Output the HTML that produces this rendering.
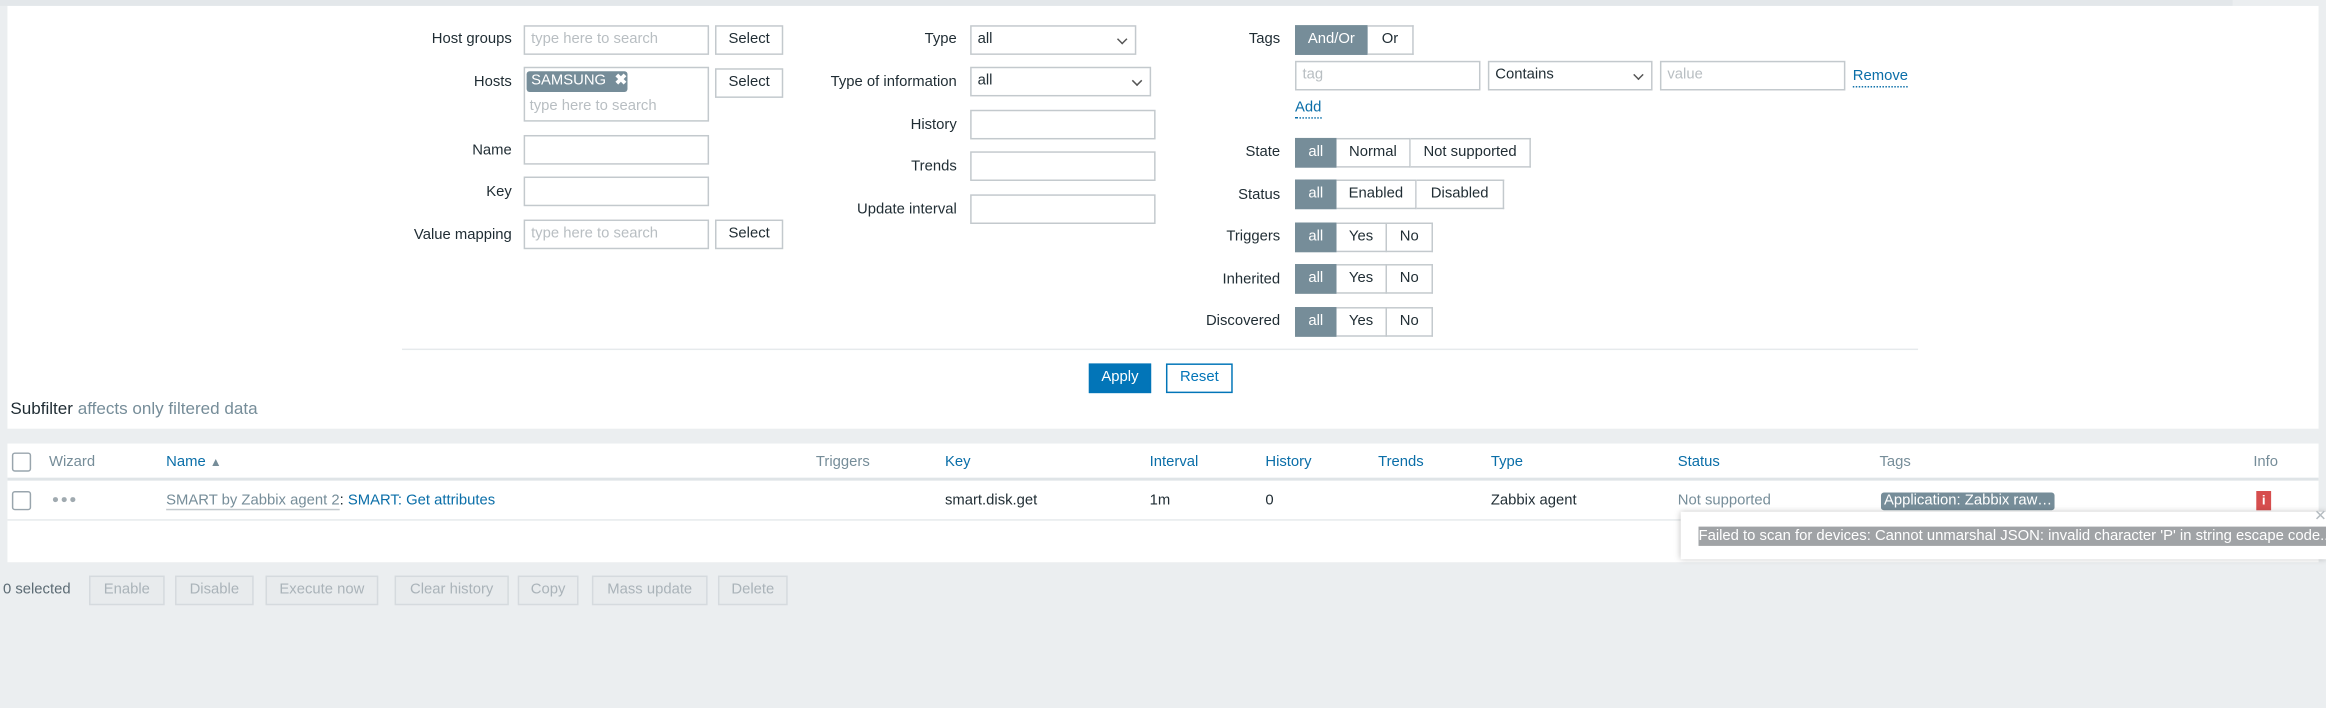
<!DOCTYPE html>
<html><head><meta charset="utf-8"><style>
html,body{margin:0;padding:0;width:2326px;height:708px;overflow:hidden;background:#ebeef0;}
#s{position:absolute;left:0;top:0;width:1568px;height:477px;transform:scale(1.48342);transform-origin:0 0;font-family:"Liberation Sans",Arial,sans-serif;font-size:10px;color:#1f2c33;}
.a{position:absolute;white-space:nowrap;}
.lbl{position:absolute;text-align:right;white-space:nowrap;line-height:20px;margin-top:1px;}
.in{position:absolute;box-sizing:border-box;border:1px solid #c3c9cd;background:#fff;height:20px;line-height:18px;padding-left:4px;color:#b8bec2;}
.sel:after{content:"";position:absolute;right:6px;top:6px;width:4px;height:4px;border-right:1px solid #555;border-bottom:1px solid #555;transform:rotate(45deg);}
.btn{position:absolute;box-sizing:border-box;border:1px solid #c3c9cd;background:#fff;height:20px;line-height:18px;text-align:center;color:#1f2c33;}
.seg{position:absolute;height:20px;display:flex;box-sizing:border-box;}
.seg span{box-sizing:border-box;border:1px solid #c3c9cd;border-left:none;height:20px;line-height:18px;text-align:center;background:#fff;}
.seg span:first-child{border-left:1px solid #768d99;background:#768d99;color:#fff;border-color:#768d99;}
.blue{color:#0a6ea8;}
.grey{color:#768d99;}
.bb{position:absolute;box-sizing:border-box;border:1px solid #d5dade;background:#e8ebed;height:20px;line-height:18px;text-align:center;color:#aab3b9;top:388px;}
.cb{position:absolute;width:13px;height:13px;border:1px solid #99a5ad;border-radius:2px;background:#fff;box-sizing:border-box;}
</style></head><body><div id="s">
<div class="a" style="left:0;top:0;width:1505px;height:4px;background:#e3e7ea"></div>
<div class="a" style="left:5px;top:4px;width:1558px;height:285px;background:#fff"></div>
<div class="a" style="left:5px;top:299px;width:1558px;height:80px;background:#fff"></div>

<div class="lbl" style="right:1223px;top:16px">Host groups</div>
<div class="in" style="left:353px;top:17px;width:125px">type here to search</div>
<div class="btn" style="left:482px;top:17px;width:46px">Select</div>
<div class="lbl" style="right:1223px;top:45px">Hosts</div>
<div class="in" style="left:353px;top:45px;width:125px;height:37px"></div>
<div class="a" style="left:355px;top:48px;width:68px;height:14px;background:#768d99;color:#fff;line-height:14px;padding-left:3px;box-sizing:border-box;border-radius:2px">SAMSUNG <b style="margin-left:3px">✖</b></div>
<div class="a" style="left:357px;top:66px;color:#b8bec2">type here to search</div>
<div class="btn" style="left:482px;top:46px;width:46px">Select</div>
<div class="lbl" style="right:1223px;top:91px">Name</div>
<div class="in" style="left:353px;top:91px;width:125px"></div>
<div class="lbl" style="right:1223px;top:119px">Key</div>
<div class="in" style="left:353px;top:119px;width:125px"></div>
<div class="lbl" style="right:1223px;top:148px">Value mapping</div>
<div class="in" style="left:353px;top:148px;width:125px">type here to search</div>
<div class="btn" style="left:482px;top:148px;width:46px">Select</div>

<div class="lbl" style="right:923px;top:16px">Type</div>
<div class="in sel" style="left:654px;top:17px;width:112px;color:#1f2c33">all</div>
<div class="lbl" style="right:923px;top:45px">Type of information</div>
<div class="in sel" style="left:654px;top:45px;width:122px;color:#1f2c33">all</div>
<div class="lbl" style="right:923px;top:74px">History</div>
<div class="in" style="left:654px;top:74px;width:125px"></div>
<div class="lbl" style="right:923px;top:102px">Trends</div>
<div class="in" style="left:654px;top:102px;width:125px"></div>
<div class="lbl" style="right:923px;top:131px">Update interval</div>
<div class="in" style="left:654px;top:131px;width:125px"></div>

<div class="lbl" style="right:705px;top:16px">Tags</div>
<div class="seg" style="left:873px;top:17px"><span style="width:49px">And/Or</span><span style="width:31px">Or</span></div>
<div class="in" style="left:873px;top:41px;width:125px">tag</div>
<div class="in sel" style="left:1003px;top:41px;width:111px;color:#1f2c33">Contains</div>
<div class="in" style="left:1119px;top:41px;width:125px">value</div>
<div class="a blue" style="left:1249px;top:46px;border-bottom:1px dotted #0a6ea8;line-height:12px">Remove</div>
<div class="a blue" style="left:873px;top:67px;border-bottom:1px dotted #0a6ea8;line-height:12px">Add</div>
<div class="lbl" style="right:705px;top:92px">State</div>
<div class="seg" style="left:873px;top:93px"><span style="width:28px">all</span><span style="width:50px">Normal</span><span style="width:81px">Not supported</span></div>
<div class="lbl" style="right:705px;top:121px">Status</div>
<div class="seg" style="left:873px;top:121px"><span style="width:28px">all</span><span style="width:54px">Enabled</span><span style="width:59px">Disabled</span></div>
<div class="lbl" style="right:705px;top:149px">Triggers</div>
<div class="seg" style="left:873px;top:150px"><span style="width:28px">all</span><span style="width:34px">Yes</span><span style="width:31px">No</span></div>
<div class="lbl" style="right:705px;top:178px">Inherited</div>
<div class="seg" style="left:873px;top:178px"><span style="width:28px">all</span><span style="width:34px">Yes</span><span style="width:31px">No</span></div>
<div class="lbl" style="right:705px;top:206px">Discovered</div>
<div class="seg" style="left:873px;top:207px"><span style="width:28px">all</span><span style="width:34px">Yes</span><span style="width:31px">No</span></div>

<div class="a" style="left:271px;top:235px;width:1022px;height:1px;background:#e6eaec"></div>
<div class="btn" style="left:734px;top:245px;width:42px;background:#0275b8;border-color:#0275b8;color:#fff">Apply</div>
<div class="btn" style="left:786px;top:245px;width:45px;border-color:#0275b8;color:#0275b8">Reset</div>
<div class="a" style="left:7px;top:270px;font-size:11.5px">Subfilter <span class="grey">affects only filtered data</span></div>

<div class="cb" style="left:8px;top:305px"></div>
<div class="a grey" style="left:33px;top:306px">Wizard</div>
<div class="a blue" style="left:112px;top:306px">Name <span style="color:#768d99;font-size:8px">▲</span></div>
<div class="a grey" style="left:550px;top:306px">Triggers</div>
<div class="a blue" style="left:637px;top:306px">Key</div>
<div class="a blue" style="left:775px;top:306px">Interval</div>
<div class="a blue" style="left:853px;top:306px">History</div>
<div class="a blue" style="left:929px;top:306px">Trends</div>
<div class="a blue" style="left:1005px;top:306px">Type</div>
<div class="a blue" style="left:1131px;top:306px">Status</div>
<div class="a grey" style="left:1267px;top:306px">Tags</div>
<div class="a grey" style="left:1519px;top:306px">Info</div>
<div class="a" style="left:5px;top:322px;width:1558px;height:2px;background:#dfe4e7"></div>
<div class="cb" style="left:8px;top:331px"></div>
<div class="a" style="left:35px;top:332px;color:#a0aab0;font-size:8px;letter-spacing:1px">●●●</div>
<div class="a" style="left:112px;top:332px"><span class="grey" style="border-bottom:1px solid #c3c9cd">SMART by Zabbix agent 2</span>: <span class="blue">SMART: Get attributes</span></div>
<div class="a" style="left:637px;top:332px">smart.disk.get</div>
<div class="a" style="left:775px;top:332px">1m</div>
<div class="a" style="left:853px;top:332px">0</div>
<div class="a" style="left:1005px;top:332px">Zabbix agent</div>
<div class="a grey" style="left:1131px;top:332px">Not supported</div>
<div class="a" style="left:1268px;top:332px;width:117px;height:12px;background:#768d99;color:#fff;line-height:12px;padding-left:2px;box-sizing:border-box;border-radius:2px">Application: Zabbix raw…</div>
<div class="a" style="left:1521px;top:331px;width:10px;height:13px;background:#d64e4e;color:#fff;text-align:center;font-weight:bold;line-height:13px;font-size:9px">i</div>
<div class="a" style="left:5px;top:350px;width:1558px;height:1px;background:#e6eaec"></div>

<div class="a" style="left:1133px;top:345px;width:435px;height:32px;background:#fff;box-shadow:0 0 4px rgba(0,0,0,0.25)"></div>
<div class="a" style="left:1560px;top:343px;color:#b5bcc1;font-size:10px">✕</div>
<div class="a" style="left:1145px;top:355px;background:#a0a3a6;color:#fff;line-height:13px;padding-right:1px">Failed to scan for devices: Cannot unmarshal JSON: invalid character 'P' in string escape code..</div>

<div class="a" style="left:2px;top:392px;color:#5c6b74">0 selected</div>
<div class="bb" style="left:60px;width:51px">Enable</div>
<div class="bb" style="left:118px;width:53px">Disable</div>
<div class="bb" style="left:179px;width:76px">Execute now</div>
<div class="bb" style="left:266px;width:77px">Clear history</div>
<div class="bb" style="left:349px;width:41px">Copy</div>
<div class="bb" style="left:399px;width:78px">Mass update</div>
<div class="bb" style="left:484px;width:47px">Delete</div>
</div></body></html>
